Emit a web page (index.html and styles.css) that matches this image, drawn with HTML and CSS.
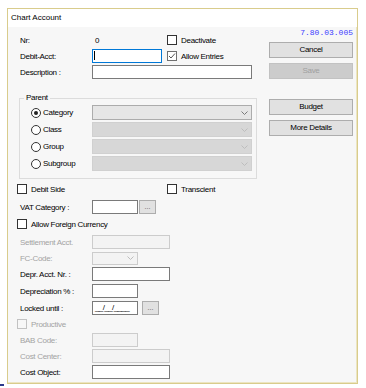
FILE: index.html
```html
<!DOCTYPE html>
<html>
<head>
<meta charset="utf-8">
<link rel="stylesheet" href="styles.css">
</head>
<body>
<div class="window">
  <div class="titlebar">Chart Account</div>
  <div class="body">
    <div class="form">
      <div class="row first">
        <span class="lbl">Nr:</span>
        <span class="val">0</span>
        <span class="chk"><span class="box"></span><span class="txt">Deactivate</span></span>
      </div>
      <div class="row">
        <span class="lbl">Debit-Acct:</span>
        <span class="input focus w70"><span class="caret"></span></span>
        <span class="chk gap5"><span class="box checked"><svg width="8" height="8" viewBox="0 0 8 8"><polyline points="1,4 3,6 7,1.5" fill="none" stroke="#555" stroke-width="1"/></svg></span><span class="txt">Allow Entries</span></span>
      </div>
      <div class="row">
        <span class="lbl">Description :</span>
        <span class="input w160"></span>
      </div>
      <fieldset class="group">
        <legend class="legend">Parent</legend>
        <div class="rrow">
          <span class="radio-wrap"><span class="radio on"></span><span class="txt">Category</span></span>
          <span class="combo"><svg class="chev" width="7" height="4" viewBox="0 0 7 4"><polyline points="0.5,0.5 3.5,3.5 6.5,0.5" fill="none" stroke="#7a7a7a" stroke-width="1"/></svg></span>
        </div>
        <div class="rrow">
          <span class="radio-wrap"><span class="radio"></span><span class="txt">Class</span></span>
          <span class="combo off"><svg class="chev" width="7" height="4" viewBox="0 0 7 4"><polyline points="0.5,0.5 3.5,3.5 6.5,0.5" fill="none" stroke="#bdbdbd" stroke-width="1"/></svg></span>
        </div>
        <div class="rrow">
          <span class="radio-wrap"><span class="radio"></span><span class="txt">Group</span></span>
          <span class="combo off"><svg class="chev" width="7" height="4" viewBox="0 0 7 4"><polyline points="0.5,0.5 3.5,3.5 6.5,0.5" fill="none" stroke="#bdbdbd" stroke-width="1"/></svg></span>
        </div>
        <div class="rrow">
          <span class="radio-wrap"><span class="radio"></span><span class="txt">Subgroup</span></span>
          <span class="combo off"><svg class="chev" width="7" height="4" viewBox="0 0 7 4"><polyline points="0.5,0.5 3.5,3.5 6.5,0.5" fill="none" stroke="#bdbdbd" stroke-width="1"/></svg></span>
        </div>
      </fieldset>
      <div class="row mt2">
        <span class="chk w150"><span class="box"></span><span class="txt">Debit Side</span></span>
        <span class="chk"><span class="box"></span><span class="txt">Transcient</span></span>
      </div>
      <div class="row mt2">
        <span class="lbl">VAT Category :</span>
        <span class="input w46"></span>
        <span class="dots g1">...</span>
      </div>
      <div class="row mt1">
        <span class="chk"><span class="box"></span><span class="txt">Allow Foreign Currency</span></span>
      </div>
      <div class="row mt2">
        <span class="lbl dis">Settlement Acct.</span>
        <span class="input off w78"></span>
      </div>
      <div class="row">
        <span class="lbl dis">FC-Code:</span>
        <span class="combo off small"><svg class="chev" width="7" height="4" viewBox="0 0 7 4"><polyline points="0.5,0.5 3.5,3.5 6.5,0.5" fill="none" stroke="#bdbdbd" stroke-width="1"/></svg></span>
      </div>
      <div class="row">
        <span class="lbl">Depr. Acct. Nr. :</span>
        <span class="input w78"></span>
      </div>
      <div class="row mt1">
        <span class="lbl">Depreciation % :</span>
        <span class="input w46"></span>
      </div>
      <div class="row mt1">
        <span class="lbl">Locked until :</span>
        <span class="input w46 mask">__/__/____</span>
        <span class="dots g4">...</span>
      </div>
      <div class="row">
        <span class="chk dis"><span class="box"></span><span class="txt">Productive</span></span>
      </div>
      <div class="row">
        <span class="lbl dis">BAB Code:</span>
        <span class="input off w46"></span>
      </div>
      <div class="row">
        <span class="lbl dis">Cost Center:</span>
        <span class="input off w78"></span>
      </div>
      <div class="row">
        <span class="lbl">Cost Object:</span>
        <span class="input w78"></span>
      </div>
    </div>
    <div class="side">
      <div class="ver">7.80.03.005</div>
      <div class="btn cancel">Cancel</div>
      <div class="btn save">Save</div>
      <div class="btn budget">Budget</div>
      <div class="btn more">More Details</div>
    </div>
  </div>
</div>
<div class="grip"></div>
</body>
</html>
```

FILE: styles.css
```css
* { box-sizing: border-box; }
html, body { margin: 0; padding: 0; background: #ffffff; }
body {
  font-family: "Liberation Sans", Arial, sans-serif;
  font-size: 8px;
  color: #000;
  padding: 8px 0 0 7px;
}
.window {
  width: 351px;
  height: 376px;
  border: 1px solid #d9cc8c;
  background: #f7f7f7;
  box-shadow: inset -1px -1px 0 #ece5c2;
}
.titlebar {
  height: 18px;
  line-height: 17px;
  background: #ffffff;
  padding-left: 3px;
  font-size: 8px;
}
.body {
  display: grid;
  grid-template-columns: 241px 84px;
  column-gap: 11px;
  padding-left: 9px;
  letter-spacing: -0.3px;
}
.form { display: flex; flex-direction: column; }
.row {
  display: flex;
  align-items: center;
  height: 16px;
}
.row.first { margin-top: 5px; }
.mt1 { margin-top: 1px; }
.mt2 { margin-top: 2px; }
.lbl { width: 75px; padding-left: 3px; white-space: nowrap; }
.val { width: 75px; padding-left: 3px; }
.dis { color: #a3a3a3; }
.input {
  display: block;
  height: 14px;
  background: #ffffff;
  border: 1px solid #7a7a7a;
  position: relative;
}
.input.focus { border-color: #0078d7; }
.input.off { background: #f3f3f3; border-color: #cccccc; }
.w46 { width: 46px; }
.w70 { width: 70px; }
.w78 { width: 78px; }
.w160 { width: 160px; }
.caret {
  display: block;
  width: 1px;
  height: 9px;
  background: #000;
  margin: 1px 0 0 1px;
}
.mask {
  line-height: 12px;
  padding-left: 2px;
  letter-spacing: -0.6px;
}
.chk { display: flex; align-items: center; white-space: nowrap; }
.chk.gap5 { margin-left: 5px; }
.chk.w150 { width: 150px; }
.box {
  width: 10px;
  height: 10px;
  border: 1px solid #333333;
  background: #ffffff;
  margin-right: 4px;
  display: flex;
  align-items: center;
  justify-content: center;
}
.box.checked { border-color: #707070; }
.chk.dis .box { border-color: #c2c2c2; background: #f7f7f7; }
.dots {
  width: 17px;
  height: 14px;
  background: #e1e1e1;
  border: 1px solid #adadad;
  text-align: center;
  line-height: 12px;
  color: #555;
  letter-spacing: 0;
  font-size: 7px;
}
.g1 { margin-left: 1px; }
.g4 { margin-left: 4px; }
.group {
  margin: 13px 0 0 2px;
  width: 238px;
  border: 1px solid #dcdcdc;
  padding: 2px 4px 7px 11px;
  min-width: 0;
}
.legend {
  padding: 0 2px;
  margin-left: -7px;
  height: 10px;
  line-height: 10px;
}
.rrow {
  display: flex;
  align-items: center;
  height: 15px;
}
.rrow + .rrow { margin-top: 2px; }
.radio-wrap { width: 61px; display: flex; align-items: center; }
.radio {
  width: 10px;
  height: 10px;
  border: 1px solid #333333;
  border-radius: 50%;
  background: #ffffff;
  margin-right: 2px;
  display: flex;
  align-items: center;
  justify-content: center;
}
.radio.on::after {
  content: "";
  width: 4px;
  height: 4px;
  border-radius: 50%;
  background: #222222;
}
.combo {
  width: 160px;
  height: 15px;
  background: #e6e6e6;
  border: 1px solid #acacac;
  display: flex;
  align-items: center;
  justify-content: flex-end;
  padding-right: 3px;
}
.combo.off { background: #d7d7d7; border-color: #d0d0d0; }
.combo.small { width: 46px; height: 13px; background: #f3f3f3; border-color: #cccccc; }
.side { display: flex; flex-direction: column; }
.ver {
  height: 11px;
  line-height: 11px;
  text-align: right;
  font-family: "Liberation Mono", "Courier New", monospace;
  font-size: 8px;
  letter-spacing: 0;
  color: #3d3dff;
}
.btn {
  height: 16px;
  border: 1px solid #adadad;
  background: #e1e1e1;
  text-align: center;
  line-height: 14px;
}
.cancel { margin-top: 4px; }
.save { margin-top: 5px; background: #cccccc; border-color: #c2c2c2; color: #a0a0a0; }
.budget { margin-top: 20px; }
.more { margin-top: 5px; }
.grip {
  width: 4px;
  height: 2px;
  margin-left: -7px;
  background: #2b3a8c;
}
```
